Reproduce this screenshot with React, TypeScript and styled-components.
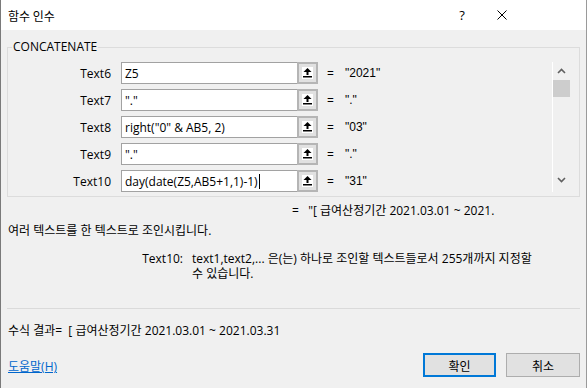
import React from "react";
import styled, { createGlobalStyle } from "styled-components";

const UI_FONT = `"Open Sans", "Noto Sans CJK KR", sans-serif`;

const GlobalStyle = createGlobalStyle`
  html, body {
    margin: 0;
    padding: 0;
    background: #f0f0f0;
  }
  * {
    box-sizing: border-box;
  }
`;

const args = [
  { name: "Text6", expr: "Z5", value: '"2021"' },
  { name: "Text7", expr: '"."', value: '"."' },
  { name: "Text8", expr: 'right("0" & AB5, 2)', value: '"03"' },
  { name: "Text9", expr: '"."', value: '"."' },
  { name: "Text10", expr: "day(date(Z5,AB5+1,1)-1)", value: '"31"', focused: true },
];

const Window = styled.div`
  width: 587px;
  height: 388px;
  display: flex;
  flex-direction: column;
  background: #f0f0f0;
  border-left: 1px solid #7a7a7a;
  border-right: 1px solid #9a9a9a;
  font-family: ${UI_FONT};
  font-size: 12px;
  color: #000;
`;

const TitleBar = styled.div`
  height: 30px;
  flex: none;
  display: flex;
  align-items: center;
  background: #fff;
  padding-left: 7px;
`;

const Title = styled.div`
  flex: 1;
  font-size: 12px;
  font-family: "Noto Sans CJK KR", sans-serif;
`;

const TitleButton = styled.div<{ $w: number }>`
  width: ${(p) => p.$w}px;
  height: 30px;
  display: flex;
  align-items: center;
  justify-content: center;
  font-size: 13px;
`;

const Body = styled.div`
  flex: 1;
  display: flex;
  flex-direction: column;
  padding: 0 6px;
`;

const Group = styled.fieldset`
  margin: 9px 0 0;
  padding: 7px 9px 4px 0;
  border: 1px solid #dcdcdc;
  min-width: 0;
  display: flex;
`;

const Legend = styled.legend`
  margin-left: 4px;
  padding: 0 1px;
  line-height: 16px;
  font-size: 12px;
`;

const Rows = styled.div`
  flex: 1;
  display: flex;
  flex-direction: column;
  gap: 5px;
`;

const Row = styled.div`
  display: grid;
  grid-template-columns: 104px 197px auto 1fr;
  align-items: center;
  height: 22px;
`;

const Label = styled.div`
  text-align: right;
  padding-right: 1px;
  margin-right: 9px;
  width: 113px;
  margin-left: -9px;
`;

const Field = styled.div`
  display: flex;
  height: 22px;
  margin-left: 9px;
  width: 197px;
`;

const Input = styled.div`
  flex: 1;
  background: #fff;
  border: 1px solid #a2a2a2;
  border-right: none;
  display: flex;
  align-items: center;
  padding-left: 3px;
  white-space: nowrap;
  overflow: hidden;
`;

const Caret = styled.span`
  display: inline-block;
  width: 1px;
  height: 15px;
  background: #000;
  margin-left: 1px;
`;

const RefButton = styled.div`
  width: 21px;
  flex: none;
  background: #e1e1e1;
  border: 2px solid #b5b5b5;
  display: flex;
  align-items: center;
  justify-content: center;
`;

const Equals = styled.div`
  margin-left: 18px;
  width: 18px;
`;

const Value = styled.div`
  font-family: "Liberation Sans", Arial, sans-serif;
  font-size: 12px;
`;

const ScrollBar = styled.div`
  width: 18px;
  flex: none;
  border-left: 1px solid #fff;
  display: flex;
  flex-direction: column;
  align-items: center;
  justify-content: space-between;
  padding-bottom: 3px;
`;

const ScrollArrow = styled.div`
  height: 18px;
  width: 17px;
  display: flex;
  align-items: center;
  justify-content: center;
`;

const Thumb = styled.div`
  width: 17px;
  height: 17px;
  background: #cdcdcd;
`;

const ScrollTop = styled.div`
  display: flex;
  flex-direction: column;
`;

const Preview = styled.div`
  margin-top: 6px;
  padding-left: 285px;
  line-height: 16px;
  white-space: nowrap;
`;

const Description = styled.div`
  margin-top: 4px;
  padding-left: 1px;
  line-height: 16px;
`;

const ArgHelp = styled.div`
  margin-top: 12px;
  display: flex;
  line-height: 15px;
`;

const ArgName = styled.div`
  width: 185px;
  text-align: right;
  padding-right: 9px;
  flex: none;
`;

const ArgText = styled.div`
  width: 345px;
  word-break: keep-all;
`;

const Separator = styled.div`
  margin-top: 27px;
  border-top: 1px solid #dadada;
`;

const Result = styled.div`
  margin-top: 14px;
  padding-left: 1px;
  line-height: 16px;
  white-space: pre;
`;

const Footer = styled.div`
  margin-top: 14px;
  display: flex;
  align-items: center;
  padding-left: 1px;
`;

const HelpLink = styled.a`
  color: #0066cc;
  text-decoration: underline;
  flex: 1;
  margin-top: 2px;
`;

const DialogButton = styled.div<{ $primary?: boolean }>`
  width: ${(p) => (p.$primary ? 73 : 74)}px;
  height: 24px;
  margin-left: ${(p) => (p.$primary ? 0 : 10)}px;
  background: #e1e1e1;
  border: ${(p) => (p.$primary ? "2px solid #0078d7" : "1px solid #adadad")};
  display: flex;
  align-items: center;
  justify-content: center;
  font-family: "Noto Sans CJK KR", sans-serif;
`;

const UpArrow = () => (
  <svg width="11" height="12" viewBox="0 0 11 12">
    <rect x="0" y="0" width="11" height="12" fill="#fff" />
    <polygon points="5.5,1 1.5,5 4.5,5 4.5,8 6.5,8 6.5,5 9.5,5" fill="#000" />
    <rect x="1" y="9" width="9" height="1.5" fill="#000" />
  </svg>
);

const Chevron = ({ up }: { up?: boolean }) => (
  <svg width="9" height="6" viewBox="0 0 9 6">
    <polyline
      points={up ? "1,5 4.5,1.5 8,5" : "1,1 4.5,4.5 8,1"}
      fill="none"
      stroke="#606060"
      strokeWidth="1.6"
    />
  </svg>
);

const CloseIcon = () => (
  <svg width="10" height="10" viewBox="0 0 10 10">
    <path d="M0.5 0.5 L9.5 9.5 M9.5 0.5 L0.5 9.5" stroke="#000" strokeWidth="1" />
  </svg>
);

export default function App() {
  return (
    <>
      <GlobalStyle />
      <Window>
        <TitleBar>
          <Title>함수 인수</Title>
          <TitleButton $w={40}>?</TitleButton>
          <TitleButton $w={40}>
            <CloseIcon />
          </TitleButton>
          <TitleButton $w={64} />
        </TitleBar>
        <Body>
          <Group>
            <Legend>CONCATENATE</Legend>
            <Rows>
              {args.map((a) => (
                <Row key={a.name}>
                  <Label>{a.name}</Label>
                  <Field>
                    <Input>
                      {a.expr}
                      {a.focused && <Caret />}
                    </Input>
                    <RefButton>
                      <UpArrow />
                    </RefButton>
                  </Field>
                  <Equals>=</Equals>
                  <Value>{a.value}</Value>
                </Row>
              ))}
            </Rows>
            <ScrollBar>
              <ScrollTop>
                <ScrollArrow>
                  <Chevron up />
                </ScrollArrow>
                <Thumb />
              </ScrollTop>
              <ScrollArrow>
                <Chevron />
              </ScrollArrow>
            </ScrollBar>
          </Group>
          <Preview>=&nbsp;&nbsp; "[ 급여산정기간 2021.03.01 ~ 2021.</Preview>
          <Description>여러 텍스트를 한 텍스트로 조인시킵니다.</Description>
          <ArgHelp>
            <ArgName>Text10:</ArgName>
            <ArgText>
              text1,text2,... 은(는) 하나로 조인할 텍스트들로서 255개까지 지정할 수 있습니다.
            </ArgText>
          </ArgHelp>
          <Separator />
          <Result>수식 결과=  [ 급여산정기간 2021.03.01 ~ 2021.03.31</Result>
          <Footer>
            <HelpLink>도움말(H)</HelpLink>
            <DialogButton $primary>확인</DialogButton>
            <DialogButton>취소</DialogButton>
          </Footer>
        </Body>
      </Window>
    </>
  );
}
